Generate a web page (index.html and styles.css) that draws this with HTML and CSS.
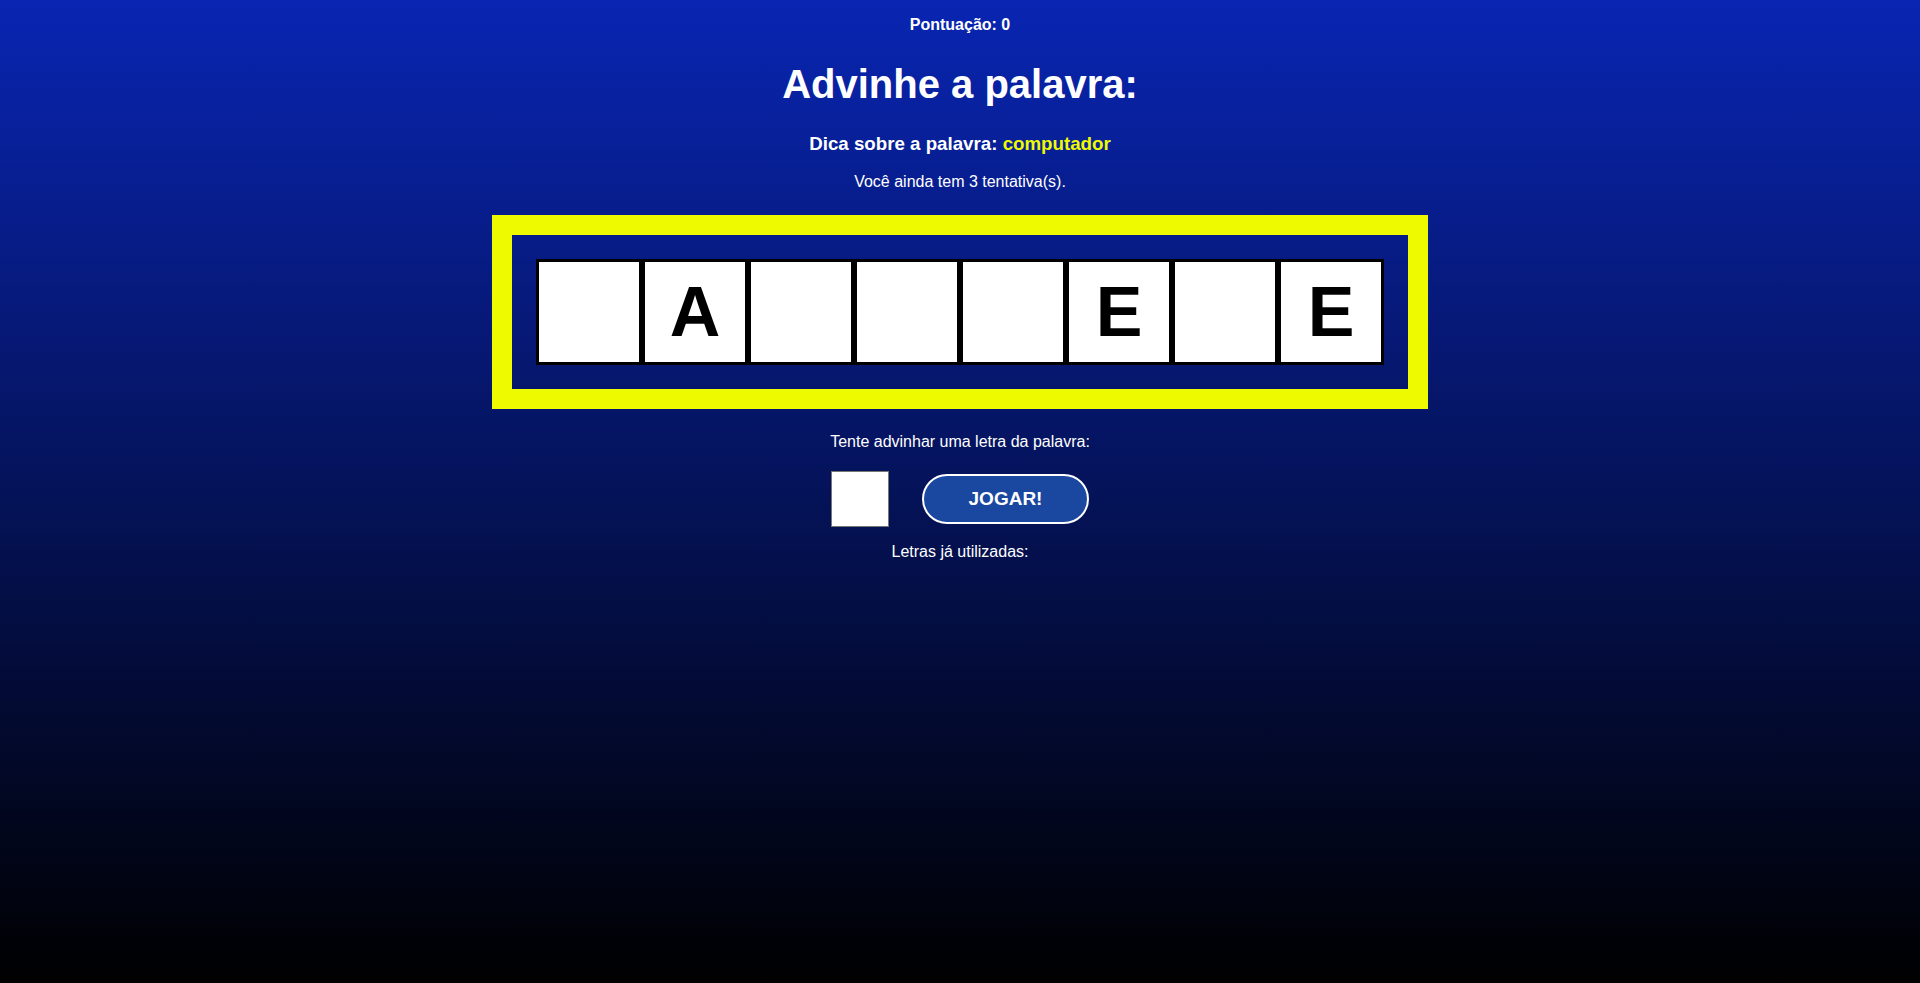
FILE: index.html
```html
<!DOCTYPE html>
<html lang="pt-BR">
<head>
<meta charset="utf-8">
<title>Advinhe a palavra</title>
<link rel="stylesheet" href="styles.css">
</head>
<body>
<main class="game">
  <p class="score">Pontuação: 0</p>
  <h1 class="title">Advinhe a palavra:</h1>
  <h3 class="hint">Dica sobre a palavra: <span class="hint-word">computador</span></h3>
  <p class="tries">Você ainda tem 3 tentativa(s).</p>
  <div class="board">
    <div class="tiles">
      <div class="tile"></div>
      <div class="tile">A</div>
      <div class="tile"></div>
      <div class="tile"></div>
      <div class="tile"></div>
      <div class="tile">E</div>
      <div class="tile"></div>
      <div class="tile">E</div>
    </div>
  </div>
  <p class="prompt">Tente advinhar uma letra da palavra:</p>
  <div class="controls">
    <input class="letter-input" type="text" maxlength="1">
    <button class="play-btn" type="button">JOGAR!</button>
  </div>
  <p class="used">Letras já utilizadas:</p>
</main>
</body>
</html>
```
FILE: styles.css
```css
html, body {
  margin: 0;
  padding: 0;
  height: 100%;
}
body {
  background: linear-gradient(to bottom, #0925b2 0%, #000000 100%);
  background-attachment: fixed;
  color: #ffffff;
  font-family: "Liberation Sans", Arial, sans-serif;
  min-height: 983px;
}
.game {
  display: flex;
  flex-direction: column;
  align-items: center;
  padding-top: 16px;
}
.score {
  margin: 0;
  font-size: 16px;
  font-weight: bold;
  line-height: 18px;
}
.title {
  margin: 27px 0 0;
  font-size: 40px;
  line-height: 46px;
  font-weight: bold;
}
.hint {
  margin: 26px 0 0;
  font-size: 18.72px;
  line-height: 22px;
  font-weight: bold;
}
.hint-word {
  color: #eefa00;
}
.tries {
  margin: 18px 0 0;
  font-size: 16px;
  line-height: 18px;
}
.board {
  margin-top: 24px;
  border: 20px solid #eefa00;
  padding: 24px;
}
.tiles {
  display: flex;
}
.tile {
  width: 106px;
  height: 106px;
  box-sizing: border-box;
  border: 3px solid #000000;
  background: #ffffff;
  color: #000000;
  font-size: 70px;
  font-weight: bold;
  line-height: 1;
  display: flex;
  align-items: center;
  justify-content: center;
}
.prompt {
  margin: 24px 0 0;
  font-size: 16px;
  line-height: 18px;
}
.controls {
  margin-top: 20px;
  display: flex;
  align-items: center;
  gap: 33px;
}
.letter-input {
  width: 58px;
  height: 56px;
  box-sizing: border-box;
  border: 1px solid #777777;
  background: #ffffff;
  margin: 0;
  padding: 0;
  font-size: 30px;
  text-align: center;
}
.play-btn {
  width: 167px;
  height: 50px;
  box-sizing: border-box;
  border: 2px solid #ffffff;
  border-radius: 25px;
  background: #1a47a0;
  color: #ffffff;
  font-family: "Liberation Sans", Arial, sans-serif;
  font-size: 19px;
  font-weight: bold;
  margin: 0;
  cursor: pointer;
}
.used {
  margin: 16px 0 0;
  font-size: 16px;
  line-height: 18px;
}
```
